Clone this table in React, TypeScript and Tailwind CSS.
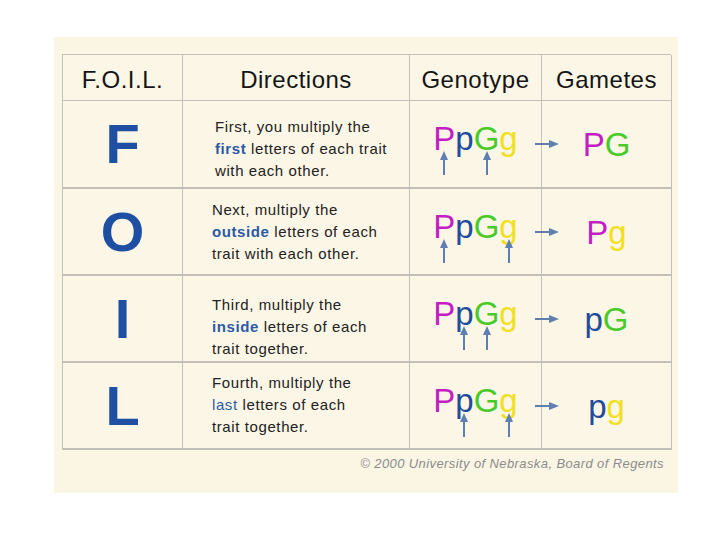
import React from 'react';

const colors: Record<string, string> = {
  P: 'text-[#c21ec4]',
  p: 'text-[#1f4c9c]',
  G: 'text-[#48cb28]',
  g: 'text-[#f1e01e]',
};

const rows = [
  {
    big: 'F',
    pad: 'pt-[15px] pl-[32px]',
    lines: [<>First, you multiply the</>, <><b className="font-bold text-[#2a5aa6]">first</b> letters of each trait</>, <>with each other.</>],
    picks: [0, 2],
    gametes: ['P', 'G'],
  },
  {
    big: 'O',
    pad: 'pt-[10px] pl-[29px]',
    lines: [<>Next, multiply the</>, <><b className="font-bold text-[#2a5aa6]">outside</b> letters of each</>, <>trait with each other.</>],
    picks: [0, 3],
    gametes: ['P', 'g'],
  },
  {
    big: 'I',
    pad: 'pt-[18px] pl-[29px]',
    lines: [<>Third, multiply the</>, <><b className="font-bold text-[#2a5aa6]">inside</b> letters of each</>, <>trait together.</>],
    picks: [1, 2],
    gametes: ['p', 'G'],
  },
  {
    big: 'L',
    pad: 'pt-[9px] pl-[29px]',
    lines: [<>Fourth, multiply the</>, <><span className="text-[#2a5aa6]">last</span> letters of each</>, <>trait together.</>],
    picks: [1, 3],
    gametes: ['p', 'g'],
  },
];

const UpArrow = () => (
  <svg width="8" height="24" viewBox="0 0 8 24" className="absolute left-1/2 -translate-x-1/2 top-[29px]">
    <polygon points="4,0 8,9 0,9" fill="#5f7fb0" />
    <rect x="3" y="8" width="2" height="16" fill="#5f7fb0" />
  </svg>
);

const RightArrow = () => (
  <svg width="24" height="8" viewBox="0 0 24 8" className="absolute left-[125px] top-[39px]">
    <rect x="0" y="3" width="16" height="2" fill="#5f7fb0" />
    <polygon points="14,0 24,4 14,8" fill="#5f7fb0" />
  </svg>
);

const cell = 'border-r border-b border-[#c2c0b8]';
const rowCell = 'border-r border-b-2 border-[#c2c0b8]';

export default function App() {
  return (
    <div className="w-[720px] h-[540px] bg-white pt-[37px] pl-[54px] font-['Liberation_Sans',Arial,sans-serif]">
      <div className="w-[624px] h-[456px] bg-[#fbf5e4] pt-[17px] pl-[8px]">
        <div className="w-[609px] grid grid-cols-[120px_227px_132px_130px] grid-rows-[46px_88px_87px_87px_87px] border-l border-t border-[#c2c0b8] bg-[#fcf6e6]">
          {['F.O.I.L.', 'Directions', 'Genotype', 'Gametes'].map((h) => (
            <div key={h} className={`${cell} text-center text-[24px] tracking-[0.5px] leading-none pt-[13px] text-[#151515]`}>
              {h}
            </div>
          ))}

          {rows.map((row) => (
            <React.Fragment key={row.big}>
              <div className={`${rowCell} flex items-center justify-center text-[56px] leading-none font-bold text-[#1e4fa2]`}>
                {row.big}
              </div>

              <div className={`${rowCell} ${row.pad} text-[15px] tracking-[0.6px] leading-[22px] text-[#222]`}>
                {row.lines.map((l, i) => (
                  <div key={i} className="whitespace-nowrap">{l}</div>
                ))}
              </div>

              <div className={`${rowCell} relative`}>
                <div className="flex justify-center pt-[21px] text-[33px] leading-none">
                  {['P', 'p', 'G', 'g'].map((ch, i) => (
                    <span key={i} className={`relative ${colors[ch]}`}>
                      {ch}
                      {row.picks.includes(i) && <UpArrow />}
                    </span>
                  ))}
                </div>
                <RightArrow />
              </div>

              <div className={`${rowCell} flex justify-center pt-[27px] text-[33px] leading-none`}>
                {row.gametes.map((ch, i) => (
                  <span key={i} className={colors[ch]}>{ch}</span>
                ))}
              </div>
            </React.Fragment>
          ))}
        </div>
        <div className="w-[609px] text-right pr-[7px] mt-[7px] text-[13px] tracking-[0.4px] leading-none italic text-[#8c8c8c]">
          © 2000 University of Nebraska, Board of Regents
        </div>
      </div>
    </div>
  );
}
